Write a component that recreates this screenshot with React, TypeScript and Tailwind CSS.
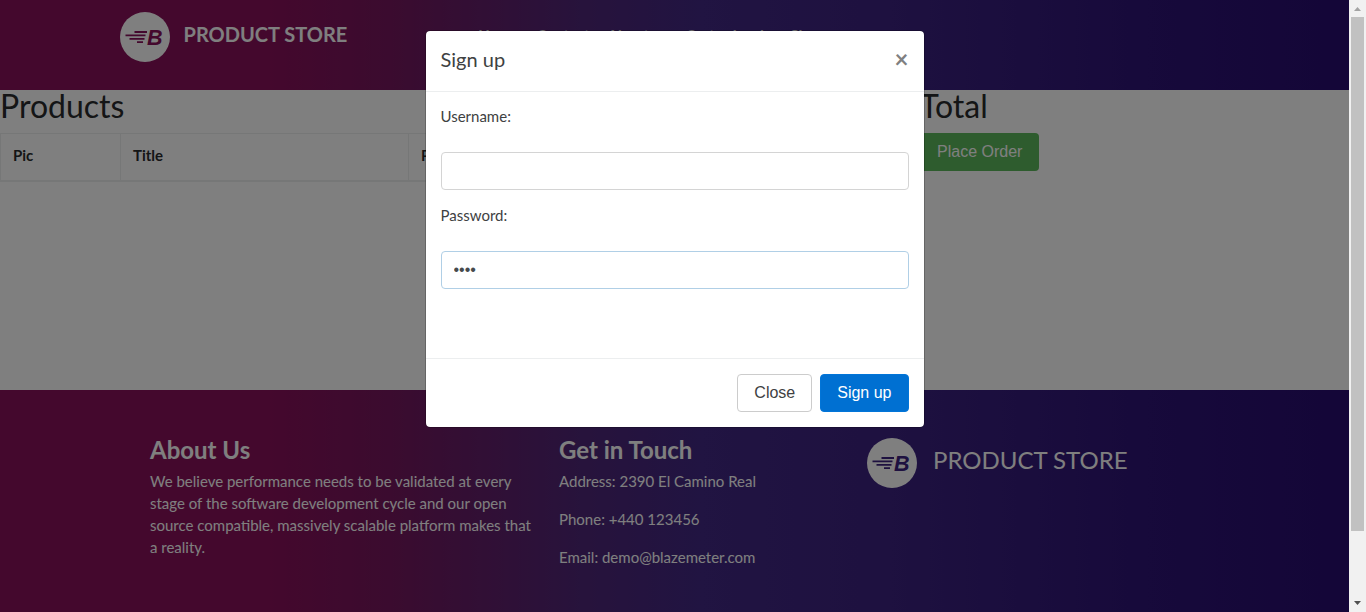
import { useId, useState } from "react";

const GRADIENT =
  "bg-[linear-gradient(to_right,#88105a_0%,#88105a_20%,#76175e_29%,#4f2678_43%,#422884_52%,#3c2280_66%,#2e1476_85%,#280c70_100%)]";

function Logo({ className, ink }: { className: string; ink: string }) {
  return (
    <svg viewBox="0 0 50 50" className={className} role="img" aria-label="Store logo">
      <circle cx="25" cy="25" r="25" fill="#fff" />
      <path d="M14.500 20h12.500M5.500 23.300h20M9.500 26.800h15M17 30.200h6" stroke={ink} strokeWidth="1.8" />
      <text x="27" y="32.500" fontFamily="Liberation Sans, sans-serif" fontWeight="bold" fontStyle="italic" fontSize="21.500" fill={ink}>
        B
      </text>
    </svg>
  );
}

function Header() {
  const links = ["Home", "Contact", "About us", "Cart", "Log in", "Sign up"];
  return (
    <nav className={`h-[90px] ${GRADIENT}`}>
      <div className="mx-auto flex w-full max-w-[1140px] items-start px-[15px] pt-3">
        <a href="#home" className="flex gap-[14px] text-xl leading-[45px] font-bold text-white">
          <Logo className="size-[50px]" ink="#88105a" />
          PRODUCT STORE
        </a>
        <ul className="ml-[131px] flex gap-[18px] pt-[11px] text-[15px] leading-6 font-bold text-white">
          {links.map((link) => (
            <li key={link}>
              <a href="#nav">{link}</a>
            </li>
          ))}
        </ul>
      </div>
    </nav>
  );
}

function Cart() {
  return (
    <main className="flex h-[300px]">
      <section className="w-[68.2%]">
        <h2 className="mb-3 text-[32px] leading-[31px] text-[#292b2c]">Products</h2>
        <table className="w-[898px] table-fixed border-collapse text-left text-[15px] leading-[22px] text-[#292b2c]">
          <thead>
            <tr className="h-[47px]">
              <th className="w-[120px] border border-b-2 border-[#eceeef] px-3 pb-1 font-bold">Pic</th>
              <th className="w-[288px] border border-b-2 border-[#eceeef] px-3 pb-1 font-bold">Title</th>
              <th className="border border-b-2 border-[#eceeef] px-3 pb-1 font-bold">Price</th>
              <th className="border border-b-2 border-[#eceeef] px-3 pb-1 font-bold">x</th>
            </tr>
          </thead>
        </table>
      </section>
      <section>
        <h2 className="mb-3 text-[32px] leading-[31px] text-[#292b2c]">Total</h2>
        <button className="h-[38px] rounded bg-[#5cb85c] px-[17px] font-['Liberation_Sans',sans-serif] text-base text-white">
          Place Order
        </button>
      </section>
    </main>
  );
}

function Footer() {
  return (
    <footer className={`min-h-[222px] grow text-white ${GRADIENT}`}>
      <div className="flex pt-12 pl-[150px] text-[15px] leading-[22px]">
        <section className="w-[409px]">
          <h4 className="mb-2 text-2xl leading-6 font-bold">About Us</h4>
          <p className="max-w-[388px]">
            We believe performance needs to be validated at every stage of the software development cycle and our open source
            compatible, massively scalable platform makes that a reality.
          </p>
        </section>
        <section className="w-[308px]">
          <h4 className="mb-2 text-2xl leading-6 font-bold">Get in Touch</h4>
          <div className="flex flex-col gap-4">
            <p>Address: 2390 El Camino Real</p>
            <p>Phone: +440 123456</p>
            <p>Email: demo@blazemeter.com</p>
          </div>
        </section>
        <div className="flex gap-4 text-2xl leading-[44px]">
          <Logo className="size-[50px]" ink="#3c2280" />
          PRODUCT STORE
        </div>
      </div>
    </footer>
  );
}

function Field(props: { label: string; type: string; value: string; onChange: (v: string) => void; focused?: boolean }) {
  const id = useId();
  return (
    <div className="mb-[15px] flex flex-col gap-[26px]">
      <label htmlFor={id} className="text-[15px] leading-5">
        {props.label}
      </label>
      <input
        id={id}
        type={props.type}
        value={props.value}
        onChange={(e) => props.onChange(e.target.value)}
        className={`h-[38px] w-full rounded border bg-white px-3 font-['Liberation_Sans',sans-serif] text-base text-[#464a4c] outline-none ${
          props.focused ? "border-[#b0cfe6]" : "border-[#d4d4d4]"
        }`}
      />
    </div>
  );
}

function SignUpDialog() {
  const [username, setUsername] = useState("");
  const [password, setPassword] = useState("test");
  return (
    <div className="absolute inset-0 flex items-start justify-center bg-black/50 pt-[31px]">
      <div
        role="dialog"
        aria-modal="true"
        aria-labelledby="signup-title"
        className="w-full max-w-[498px] rounded bg-white text-[#3e4142] outline outline-black/20"
      >
        <div className="flex items-center justify-between border-b border-[#eceeef] px-[15px] pt-[13px] pb-[17px]">
          <h5 id="signup-title" className="text-xl leading-[30px]">
            Sign up
          </h5>
          <button aria-label="Close dialog" className="text-2xl leading-6 font-bold text-[#808080]">
            ×
          </button>
        </div>
        <form className="h-[266px] px-[15px] pt-[14px]">
          <Field label="Username:" type="text" value={username} onChange={setUsername} />
          <Field label="Password:" type="password" value={password} onChange={setPassword} focused />
        </form>
        <div className="flex justify-end gap-2 border-t border-[#eceeef] p-[15px] font-['Liberation_Sans',sans-serif] text-base">
          <button className="h-[38px] rounded border border-[#ccc] bg-white px-4">Close</button>
          <button className="h-[38px] rounded border border-[#0275d8] bg-[#0070d2] px-4 text-white">Sign up</button>
        </div>
      </div>
    </div>
  );
}

function Scrollbar() {
  return (
    <div aria-hidden="true" className="flex w-[17px] shrink-0 flex-col items-center bg-[#f1f1f1]">
      <svg viewBox="0 0 17 17" className="size-[17px]">
        <path d="M5 11l3.500-4 3.500 4z" fill="#a3a3a3" />
      </svg>
      <div className="h-[514px] w-[13px] bg-[#c1c1c1]" />
      <svg viewBox="0 0 17 17" className="mt-auto size-[17px]">
        <path d="M5 6l3.500 4 3.500-4z" fill="#505050" />
      </svg>
    </div>
  );
}

export default function App() {
  return (
    <div className="flex h-screen overflow-hidden font-[Lato,sans-serif]">
      <div className="relative flex min-w-0 grow flex-col overflow-hidden bg-white">
        <Header />
        <Cart />
        <Footer />
        <SignUpDialog />
      </div>
      <Scrollbar />
    </div>
  );
}
